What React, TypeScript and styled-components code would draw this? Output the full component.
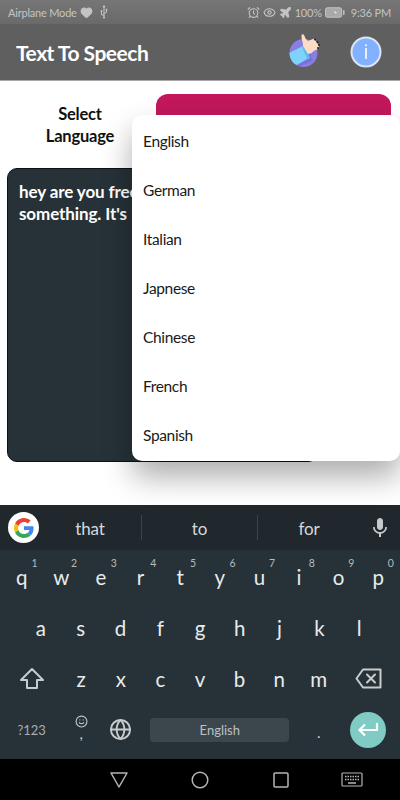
import React from "react";
import styled, { createGlobalStyle } from "styled-components";
import { AlarmClock, Eye, Plane, HeartPulse, Usb, Globe, Smile } from "lucide-react";
import { MdMic } from "react-icons/md";

const Global = createGlobalStyle`
  html, body { margin: 0; padding: 0; background: #fff; }
  body { font-family: "Lato", "Open Sans", sans-serif; }
`;

const Screen = styled.div`
  width: 400px;
  height: 800px;
  display: flex;
  flex-direction: column;
  overflow: hidden;
`;

const StatusBar = styled.div`
  height: 24px;
  flex: none;
  background: linear-gradient(#767676, #6a6a6a);
  color: #c4c4c4;
  font-size: 11px;
  letter-spacing: -0.2px;
  display: flex;
  align-items: center;
  padding: 0 9px 0 8px;
  justify-content: space-between;
`;
const StatusGroup = styled.div`
  display: flex;
  align-items: center;
  gap: 3px;
`;
const Time = styled.span`
  margin-left: 3px;
`;
const UsbGlyph = styled(Usb)`
  margin-left: 2px;
  transform: rotate(-45deg);
`;

const AppBar = styled.header`
  height: 57px;
  flex: none;
  background: #5f5f5f;
  border-bottom: 1px solid #a8a8a8;
  box-sizing: border-box;
  display: flex;
  align-items: center;
  padding: 0 18px 0 16px;
  color: #fff;
`;
const Title = styled.h1`
  margin: 1px 0 0;
  flex: 1;
  font-size: 21px;
  font-weight: 700;
  letter-spacing: -0.5px;
`;
const AppIcons = styled.div`
  display: flex;
  align-items: center;
  gap: 29px;
`;
const HandSlot = styled.div`
  display: flex;
  margin-bottom: 5px;
`;

const Content = styled.main`
  position: relative;
  height: 424px;
  flex: none;
  background: #fff;
  padding: 13px 9px 0 7px;
  box-sizing: border-box;
`;
const TopRow = styled.div`
  display: flex;
  align-items: flex-start;
`;
const SelectLabel = styled.div`
  width: 146px;
  margin-right: 3px;
  flex: none;
  text-align: center;
  font-size: 16.5px;
  font-weight: 700;
  letter-spacing: -0.2px;
  line-height: 22px;
  color: #111;
  padding-top: 9px;
  box-sizing: border-box;
`;
const LanguageButton = styled.div`
  flex: 1;
  height: 50px;
  border-radius: 12px;
  background: #c2185b;
`;
const TextCard = styled.div`
  margin-top: 21px;
  width: 311px;
  height: 294px;
  box-sizing: border-box;
  padding: 12px 11px;
  background: #263238;
  border: 1px solid #0c1114;
  border-radius: 10px;
  color: #fff;
  font-size: 17px;
  font-weight: 700;
  letter-spacing: -0.1px;
  line-height: 22px;
  white-space: nowrap;
  overflow: hidden;
`;
const Dropdown = styled.ul`
  position: absolute;
  top: 34px;
  right: 0;
  width: 268px;
  height: 346px;
  margin: 0;
  padding: 1px 0 0;
  list-style: none;
  box-sizing: border-box;
  background: #fff;
  border-radius: 10px;
  box-shadow: 0 16px 30px rgba(0, 0, 0, 0.32);
`;
const DropdownItem = styled.li`
  height: 49px;
  display: flex;
  align-items: center;
  padding-left: 11px;
  font-size: 15.5px;
  letter-spacing: -0.35px;
  color: #1a1a1a;
`;

const Keyboard = styled.section`
  height: 254px;
  flex: none;
  background: #263238;
  color: #e6e9ea;
  display: flex;
  flex-direction: column;
`;
const SuggestionStrip = styled.div`
  height: 45px;
  flex: none;
  background: #20282e;
  display: flex;
  align-items: center;
  padding-left: 8px;
  box-sizing: border-box;
`;
const GoogleBadge = styled.div`
  width: 31px;
  height: 31px;
  border-radius: 50%;
  background: #fff;
  display: flex;
  align-items: center;
  justify-content: center;
  flex: none;
`;
const Suggestion = styled.div<{ $divider?: boolean; $width: number }>`
  width: ${(p) => p.$width}px;
  height: 25px;
  flex: none;
  display: flex;
  align-items: center;
  justify-content: center;
  padding-top: 2px;
  font-size: 17px;
  letter-spacing: -0.1px;
  color: #d5d9db;
  border-left: ${(p) => (p.$divider ? "1px solid #3a444b" : "none")};
  box-sizing: border-box;
`;
const MicSlot = styled.div`
  flex: 1;
  display: flex;
  justify-content: center;
  color: #c6cacc;
`;
const KeyRows = styled.div`
  flex: 1;
  display: grid;
  grid-template-rows: repeat(4, 1fr);
  padding: 1px 2px 4px;
`;
const KeyRow = styled.div<{ $inset?: number }>`
  display: flex;
  align-items: center;
  padding: 0 ${(p) => p.$inset ?? 0}px;
`;
const Key = styled.div<{ $flex?: number }>`
  flex: ${(p) => p.$flex ?? 1} 1 0;
  min-width: 0;
  height: 100%;
  position: relative;
  display: flex;
  align-items: center;
  justify-content: center;
  font-size: 20.5px;
  color: #e8ebec;
`;
const Hint = styled.span`
  position: absolute;
  top: 6px;
  right: 4px;
  font-size: 10.5px;
  color: #b5babd;
`;
const SymbolLabel = styled.span`
  font-size: 13px;
  color: #a8adb0;
`;
const EmojiStack = styled.div`
  display: flex;
  flex-direction: column;
  align-items: center;
  margin-top: -6px;
  color: #c6cacc;
  font-size: 15px;
  line-height: 11px;
`;
const Period = styled.span`
  font-size: 15px;
  color: #c6cacc;
  margin-top: 4px;
`;
const SpaceBar = styled.div`
  width: 139px;
  height: 24px;
  border-radius: 4px;
  background: #3b464d;
  display: flex;
  align-items: center;
  justify-content: center;
  font-size: 13px;
  color: #bcc1c4;
`;
const EnterButton = styled.div`
  width: 36px;
  height: 36px;
  border-radius: 50%;
  background: #80cbc4;
  display: flex;
  align-items: center;
  justify-content: center;
`;

const NavBar = styled.nav`
  height: 41px;
  flex: none;
  background: #000;
  display: grid;
  grid-template-columns: 79px 80px 81px 81px 62px;
  align-items: center;
  justify-items: center;
  box-sizing: border-box;
`;

const HandIcon = () => (
  <svg width="32" height="34" viewBox="0 0 32 34">
    <defs>
      <clipPath id="disc">
        <circle cx="14.5" cy="20" r="14" />
      </clipPath>
    </defs>
    <circle cx="14.5" cy="20" r="14" fill="#8a7de3" />
    <g clipPath="url(#disc)">
      <path d="M1 20 L18 13 L24 28 L8 34 L1 34 Z" fill="#7c6fd8" />
      <path d="M0 20 L14 13 L20 25 L8 32 L2 30 Z" fill="#7ed2fb" />
      <path d="M13 14 L15.5 12.5 L21 25 L18.5 26.5 Z" fill="#5cbcec" />
    </g>
    <path
      d="M14 13 C14.5 10 12 6 12.5 2 C13 0.5 15 1 15.5 3 C16 5 17.5 7 19 8 L25 5.5 L30 13 C30 15.5 28 17 25.5 17.5 C23 20 21 21 19 21 Z"
      fill="#fddcc4"
    />
    <g fill="#222">
      <circle cx="26" cy="6.5" r="1" />
      <circle cx="28.5" cy="9" r="1" />
      <circle cx="30" cy="12" r="1" />
      <circle cx="29" cy="15" r="1" />
    </g>
  </svg>
);

const InfoIcon = () => (
  <svg width="32" height="32" viewBox="0 0 32 32">
    <circle cx="16" cy="16" r="14.5" fill="#82b1ff" stroke="#dbe5f5" strokeWidth="2" />
    <circle cx="16" cy="9.3" r="1" fill="#fff" />
    <rect x="15.2" y="12" width="1.6" height="11" fill="#fff" />
  </svg>
);

const GoogleIcon = () => (
  <svg width="20" height="20" viewBox="0 0 48 48">
    <path fill="#EA4335" d="M24 9.5c3.5 0 6.7 1.3 9.1 3.5l6.8-6.8C35.8 2.4 30.3 0 24 0 14.6 0 6.5 5.4 2.6 13.2l7.9 6.2C12.4 13.6 17.7 9.5 24 9.5z" />
    <path fill="#4285F4" d="M46.9 24.5c0-1.6-.1-3.1-.4-4.5H24v9h12.9c-.6 3-2.2 5.5-4.7 7.2l7.7 6c4.5-4.2 7-10.3 7-17.7z" />
    <path fill="#FBBC05" d="M10.5 28.6c-.5-1.4-.8-3-.8-4.6s.3-3.2.8-4.6l-7.9-6.2C.9 16.5 0 20.1 0 24s.9 7.5 2.6 10.8l7.9-6.2z" />
    <path fill="#34A853" d="M24 48c6.5 0 11.9-2.1 15.9-5.8l-7.7-6c-2.2 1.4-4.9 2.3-8.2 2.3-6.3 0-11.6-4.2-13.5-9.9l-7.9 6.2C6.5 42.6 14.6 48 24 48z" />
  </svg>
);

const BatteryIcon = () => (
  <svg width="20" height="11" viewBox="0 0 21 11">
    <rect x="0.5" y="0.5" width="17" height="10" rx="2" fill="#a9a9a9" stroke="#c4c4c4" />
    <rect x="19" y="3" width="1.5" height="5" fill="#c4c4c4" />
    <path d="M6 5.5h4.5L9.5 3.8 13 5.5h-1.5L12 7.2 9.5 5.5" fill="#eee" />
  </svg>
);

const ShiftIcon = () => (
  <svg width="24" height="24" viewBox="0 0 24 24" fill="none" stroke="#c8cccd" strokeWidth="2" strokeLinejoin="round">
    <path d="M12 2 L23 13 H17 V21 H7 V13 H1 Z" />
  </svg>
);

const BackspaceIcon = () => (
  <svg width="27" height="21" viewBox="0 0 27 21" fill="none" stroke="#c8cccd" strokeWidth="2" strokeLinejoin="round">
    <path d="M8 1.5 H25.5 V19.5 H8 L1.5 10.5 Z" />
    <path d="M12 6.5 L20 14.5 M20 6.5 L12 14.5" strokeLinecap="round" />
  </svg>
);

const EnterIcon = () => (
  <svg width="22" height="16" viewBox="0 0 22 16" fill="none" stroke="#fff" strokeWidth="2.2">
    <path d="M20 1 V8 H3" />
    <path d="M8 2.5 L2.5 8 L8 13.5" />
  </svg>
);

const BackIcon = () => (
  <svg width="20" height="20" viewBox="0 0 20 20" fill="none" stroke="#b5b5b5" strokeWidth="1.5" strokeLinejoin="round">
    <path d="M2 3 H18 L10 17 Z" />
  </svg>
);
const HomeIcon = () => (
  <svg width="20" height="20" viewBox="0 0 20 20" fill="none" stroke="#b5b5b5" strokeWidth="1.5">
    <circle cx="10" cy="10" r="7.8" />
  </svg>
);
const RecentIcon = () => (
  <svg width="18" height="18" viewBox="0 0 18 18" fill="none" stroke="#b5b5b5" strokeWidth="1.5">
    <rect x="2" y="2" width="14" height="14" rx="1.2" />
  </svg>
);
const KeyboardIcon = () => (
  <svg width="22" height="16" viewBox="0 0 22 16" fill="none" stroke="#b5b5b5" strokeWidth="1.2">
    <rect x="1" y="1" width="20" height="13" rx="1" />
    <path d="M4 4.5h14M4 7.5h14" strokeDasharray="1.5 1" strokeWidth="1.5" />
    <path d="M7 11h8" strokeWidth="1.5" />
  </svg>
);

const languages = ["English", "German", "Italian", "Japnese", "Chinese", "French", "Spanish"];
const row1 = [["q", "1"], ["w", "2"], ["e", "3"], ["r", "4"], ["t", "5"], ["y", "6"], ["u", "7"], ["i", "8"], ["o", "9"], ["p", "0"]];
const row2 = ["a", "s", "d", "f", "g", "h", "j", "k", "l"];
const row3 = ["z", "x", "c", "v", "b", "n", "m"];

export default function App() {
  return (
    <Screen>
      <Global />
      <StatusBar>
        <StatusGroup>
          Airplane Mode
          <HeartPulse size={13} color="#c4c4c4" fill="#c4c4c4" />
          <UsbGlyph size={12} color="#c4c4c4" />
        </StatusGroup>
        <StatusGroup>
          <AlarmClock size={13} />
          <Eye size={13} />
          <Plane size={13} fill="#c4c4c4" />
          100%
          <BatteryIcon />
          <Time>9:36 PM</Time>
        </StatusGroup>
      </StatusBar>
      <AppBar>
        <Title>Text To Speech</Title>
        <AppIcons>
          <HandSlot>
            <HandIcon />
          </HandSlot>
          <InfoIcon />
        </AppIcons>
      </AppBar>
      <Content>
        <TopRow>
          <SelectLabel>
            Select
            <br />
            Language
          </SelectLabel>
          <LanguageButton />
        </TopRow>
        <TextCard>
          hey are you free
          <br />
          something. It's
        </TextCard>
        <Dropdown>
          {languages.map((l) => (
            <DropdownItem key={l}>{l}</DropdownItem>
          ))}
        </Dropdown>
      </Content>
      <Keyboard>
        <SuggestionStrip>
          <GoogleBadge>
            <GoogleIcon />
          </GoogleBadge>
          <Suggestion $width={102}>that</Suggestion>
          <Suggestion $width={116} $divider>to</Suggestion>
          <Suggestion $width={103} $divider>for</Suggestion>
          <MicSlot>
            <MdMic size={24} />
          </MicSlot>
        </SuggestionStrip>
        <KeyRows>
          <KeyRow>
            {row1.map(([k, h]) => (
              <Key key={k}>
                {k}
                <Hint>{h}</Hint>
              </Key>
            ))}
          </KeyRow>
          <KeyRow $inset={19}>
            {row2.map((k) => (
              <Key key={k}>{k}</Key>
            ))}
          </KeyRow>
          <KeyRow>
            <Key $flex={1.5}>
              <ShiftIcon />
            </Key>
            {row3.map((k) => (
              <Key key={k}>{k}</Key>
            ))}
            <Key $flex={1.5}>
              <BackspaceIcon />
            </Key>
          </KeyRow>
          <KeyRow>
            <Key $flex={1.5}>
              <SymbolLabel>?123</SymbolLabel>
            </Key>
            <Key>
              <EmojiStack>
                <Smile size={13} />
                <span>,</span>
              </EmojiStack>
            </Key>
            <Key>
              <Globe size={23} color="#c8cccd" />
            </Key>
            <Key $flex={4}>
              <SpaceBar>English</SpaceBar>
            </Key>
            <Key>
              <Period>.</Period>
            </Key>
            <Key $flex={1.5}>
              <EnterButton>
                <EnterIcon />
              </EnterButton>
            </Key>
          </KeyRow>
        </KeyRows>
      </Keyboard>
      <NavBar>
        <span />
        <BackIcon />
        <HomeIcon />
        <RecentIcon />
        <KeyboardIcon />
      </NavBar>
    </Screen>
  );
}
